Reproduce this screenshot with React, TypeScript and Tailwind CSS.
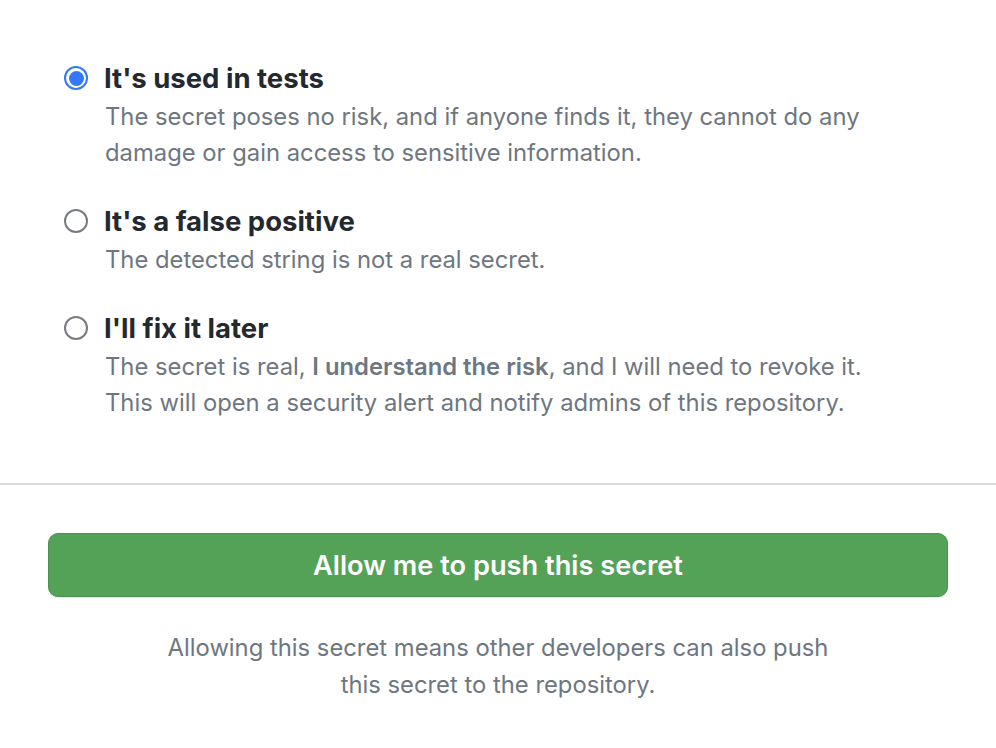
import React from "react";

function Radio({ checked }: { checked?: boolean }) {
  return checked ? (
    <span className="flex h-[24px] w-[24px] shrink-0 items-center justify-center rounded-full border-[2px] border-[#3478f6] bg-white">
      <span className="h-[15px] w-[15px] rounded-full bg-[#3478f6]" />
    </span>
  ) : (
    <span className="h-[24px] w-[24px] shrink-0 rounded-full border-[2px] border-[#777b80] bg-white" />
  );
}

function Option({
  checked,
  title,
  children,
}: {
  checked?: boolean;
  title: string;
  children: React.ReactNode;
}) {
  return (
    <div className="flex flex-col">
      <div className="flex h-[36px] items-center gap-[16px]">
        <Radio checked={checked} />
        <span className="-mt-[1px] text-[27.5px] font-bold leading-[36px] text-[#24292f]">{title}</span>
      </div>
      <div className="mt-[3px] whitespace-nowrap pl-[41px] text-[23.8px] leading-[36px] text-[#6e7781]">{children}</div>
    </div>
  );
}

export default function App() {
  return (
    <div
      className="h-[748px] w-[996px] overflow-hidden bg-white"
      style={{ fontFamily: "Inter, 'Noto Sans', sans-serif" }}
    >
      <div className="flex flex-col gap-[32px] pl-[64px] pr-[40px] pt-[60px] pb-[62px]">
        <Option checked title="It's used in tests">
          The secret poses no risk, and if anyone finds it, they cannot do any
          <br />
          damage or gain access to sensitive information.
        </Option>
        <Option title="It's a false positive">The detected string is not a real secret.</Option>
        <Option title="I'll fix it later">
          The secret is real, <span className="font-semibold">I understand the risk</span>, and I will need to
          revoke it.
          <br />
          This will open a security alert and notify admins of this repository.
        </Option>
      </div>
      <div className="h-[2px] w-full bg-[#d8dadd]" />
      <div className="flex flex-col items-center px-[48px] pt-[48px]">
        <button className="flex h-[64px] w-full items-center justify-center rounded-[10px] border border-[#4a9150] bg-[#54a257] pt-[2px] text-[27.2px] font-semibold text-white shadow-[0_1px_1px_rgba(0,0,0,0.08)]">
          Allow me to push this secret
        </button>
        <p className="mt-[32px] whitespace-nowrap text-center text-[23.8px] leading-[37px] text-[#6e7781]">
          Allowing this secret means other developers can also push
          <br />
          this secret to the repository.
        </p>
      </div>
    </div>
  );
}
